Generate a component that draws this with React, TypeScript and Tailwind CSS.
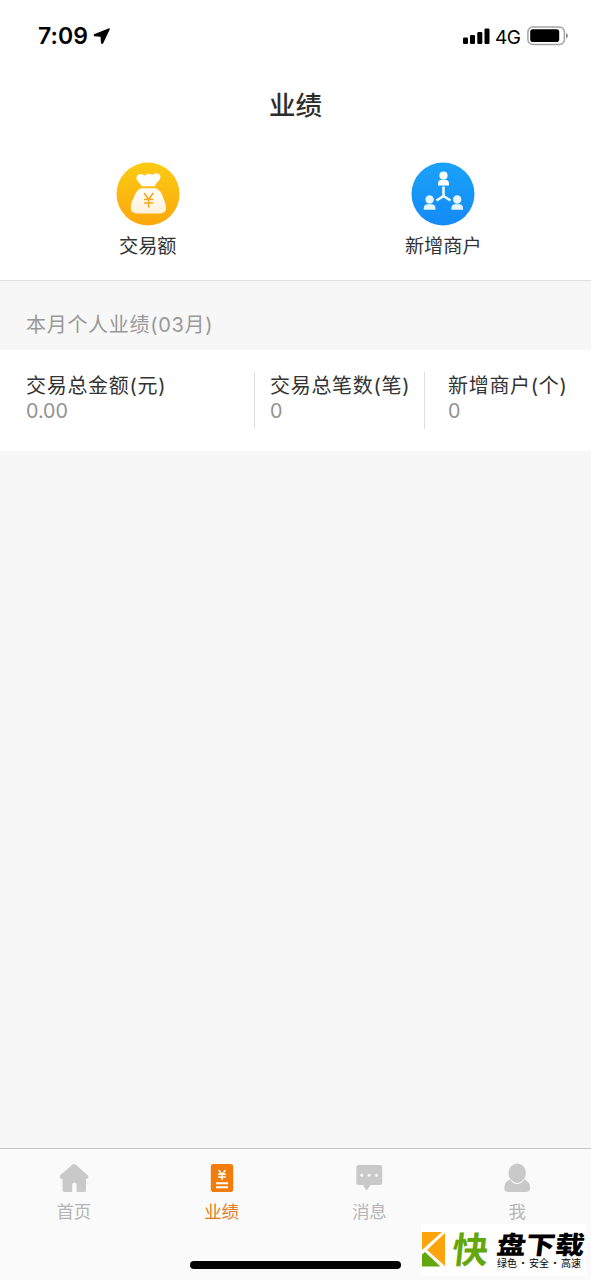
import type { ReactNode } from "react";

function StatusBar() {
  return (
    <div className="flex h-[72px] items-center justify-between pl-[38px] pr-[22px] text-black">
      <div className="flex items-center">
        <span className="w-[55px] whitespace-nowrap text-[23px] font-semibold leading-none tracking-[0.1px]">7:09</span>
        <svg width="17" height="17" viewBox="0 0 17 17">
          <path d="M16.8 .6Q16.500 0 15.500 .5L1 6.200Q.2 7.500 1.300 8.300L7.500 8.700 8 15Q9 16.900 10.200 15.300L16.700 1.600Z" fill="#000" />
        </svg>
      </div>
      <div className="flex items-center">
        <svg width="27" height="16" viewBox="0 0 27 16" className="mr-[5px]">
          <rect x="0" y="9.5" width="5" height="6.5" rx="1.2" />
          <rect x="7" y="7" width="5" height="9" rx="1.2" />
          <rect x="14.3" y="4" width="5" height="12" rx="1.2" />
          <rect x="21.5" y="0.5" width="5" height="15.5" rx="1.2" />
        </svg>
        <span className="mr-[6px] mt-[2px] w-[26px] whitespace-nowrap text-[19px] leading-none tracking-[-0.5px]">4G</span>
        <svg width="42" height="20" viewBox="0 0 42 20">
          <rect x=".9" y="1" width="36.5" height="17.5" rx="5" fill="none" stroke="#a3a3a3" strokeWidth="1.5" />
          <rect x="3.2" y="3.3" width="29" height="12.8" rx="2.8" />
          <path d="M39 7v5.5q2-1 2-2.75T39 7Z" fill="#8c8c8c" />
        </svg>
      </div>
    </div>
  );
}

function MoneyIcon() {
  return (
    <svg width="64" height="64" viewBox="0 0 64 64">
      <defs>
        <linearGradient id="gold" x1="0" y1="0" x2="0" y2="1">
          <stop offset="0" stopColor="#fbcb14" />
          <stop offset="1" stopColor="#fba70d" />
        </linearGradient>
        <linearGradient id="bag" x1="0" y1="0" x2="0" y2="1">
          <stop offset="0" stopColor="#fff" />
          <stop offset="1" stopColor="#fff1d9" />
        </linearGradient>
      </defs>
      <circle cx="32" cy="32" r="31.5" fill="url(#gold)" />
      <path d="M25.500 24.300Q24.500 21.500 22 19.500Q18.500 15 22.500 12.600Q25.500 11 28.800 13.500Q32.500 10.500 36 13Q40 9.800 43.500 12.500Q46 16 42 19.500Q39.500 21.500 39 24.300Z" fill="#fff" />
      <path d="M26 26.300H39Q43 27 45.500 31.500L49 40.500Q52.500 51.500 43.500 51.500H21.500Q12.500 51.500 15.500 40.500L19.500 31.500Q22 27 26 26.300Z" fill="url(#bag)" />
      <path d="m28.200 31 4.500 6.500 4.500-6.500M28 37.500h9.400M28 41h9.400M32.700 37.500v8" fill="none" stroke="#efaa20" strokeWidth="1.600" />
    </svg>
  );
}

function MerchantIcon() {
  return (
    <svg width="64" height="64" viewBox="0 0 64 64">
      <defs>
        <linearGradient id="azure" x1="0" y1="0" x2="0" y2="1">
          <stop offset="0" stopColor="#1aa2f8" />
          <stop offset="1" stopColor="#148af6" />
        </linearGradient>
      </defs>
      <circle cx="32" cy="32" r="31.5" fill="url(#azure)" />
      <g fill="#fff">
        <circle cx="32.500" cy="13.500" r="4.100" />
        <path d="M27 23.600v-1.800q0-4 4-4h3q4 0 4 4v1.800Z" />
      </g>
      <path d="M32.500 24.500v9.500l-7 4.500M32.500 34l7 4.500" fill="none" stroke="#eef9ff" strokeWidth="2.600" />
      <g fill="#e6f7ff">
        <circle cx="18.600" cy="37.500" r="4.200" />
        <path d="M12.800 47.800v-1.500q0-4 4-4h3.600q4 0 4 4v1.500Z" />
        <circle cx="46.200" cy="37.500" r="4.200" />
        <path d="M40.400 47.800v-1.500q0-4 4-4h3.600q4 0 4 4v1.500Z" />
      </g>
    </svg>
  );
}

function Shortcut({ icon, label }: { icon: ReactNode; label: string }) {
  return (
    <div className="flex flex-1 flex-col items-center">
      {icon}
      <span className="mt-[6px] text-[19.2px] leading-[28px] text-[#333]">{label}</span>
    </div>
  );
}

function Stat({ label, value }: { label: string; value: string }) {
  return (
    <div className="flex flex-col whitespace-nowrap pt-px text-[20px] leading-[26px] tracking-[0.7px]">
      <span className="text-[#333]">{label}</span>
      <span className="text-[19.700px] leading-[24px] tracking-[0] text-[#919191]">{value}</span>
    </div>
  );
}

function Tab({ icon, label, active = false }: { icon: ReactNode; label: string; active?: boolean }) {
  return (
    <div className={active ? "flex flex-1 flex-col items-center text-[#e67a22]" : "flex flex-1 flex-col items-center text-[#b5b5b5]"}>
      {icon}
      <span className="mt-[6px] text-[17.5px] leading-[24px]">{label}</span>
    </div>
  );
}

const tabs = [
  {
    label: "首页",
    icon: (
      <svg width="32" height="32" viewBox="0 0 32 32">
        <path d="M14.500 2.600Q16 1.400 17.500 2.600L29.500 13Q31.500 16.200 29 16.700H28V28Q28 30 26 30H18.600V23Q18.600 20.500 16.400 20.500T14.200 23V30H6.500Q4.500 30 4.500 28V16.700H3Q.8 16.200 2.500 13Z" fill="#c9c9c9" />
      </svg>
    ),
  },
  {
    label: "业绩",
    active: true,
    icon: (
      <svg width="32" height="32" viewBox="0 0 32 32">
        <rect x="4.800" y="2" width="22.400" height="28" rx="2.800" fill="#f27d0c" />
        <path d="m12.500 8 3.500 4.500L19.500 8M12 12.300h8M12 15h8M16 12.500V18" fill="none" stroke="#fff" strokeWidth="1.400" />
        <path d="M10 21.200h12M10 25.200h12" stroke="#fff" strokeWidth="1.900" />
      </svg>
    ),
  },
  {
    label: "消息",
    icon: (
      <svg width="32" height="32" viewBox="0 0 32 32">
        <path d="M6 3H26.500Q29.200 3 29.200 5.500V20.500Q29.200 23 26.500 23H17.500L13.700 28.500 9.800 23H6Q3.300 23 3.300 20.500V5.500Q3.300 3 6 3Z" fill="#c9c9c9" />
        <g fill="#fafafa">
          <circle cx="8.800" cy="13.200" r="1.500" />
          <circle cx="16.200" cy="13.200" r="1.500" />
          <circle cx="23.500" cy="13.200" r="1.500" />
        </g>
      </svg>
    ),
  },
  {
    label: "我",
    icon: (
      <svg width="32" height="32" viewBox="0 0 32 32">
        <path d="M9.500 17Q3.200 20 3.200 26Q3.200 30 8 30H24.500Q29.200 30 29.200 26Q29.200 20 23 17Z" fill="#c9c9c9" />
        <path d="M9.500 17Q12 21.500 16.200 21.500T23 17" fill="none" stroke="#fafafa" strokeWidth="1.300" />
        <ellipse cx="16.200" cy="11" rx="8.700" ry="9.500" fill="#c9c9c9" />
      </svg>
    ),
  },
];

function DownloadBadge() {
  return (
    <div className="absolute left-[421px] top-[1224px] flex h-[52px] w-[165px] bg-white pl-px pt-[8px] font-['Noto_Sans_CJK_SC',sans-serif]">
      <svg width="24" height="35" viewBox="0 0 24 35" className="shrink-0">
        <path d="M0 0H20L0 18Z" fill="#fda30b" />
        <path d="M23 1V34L5 18Z" fill="#fda30b" />
        <path d="M3 20 18.500 34.500H0V22.500Z" fill="#64a70b" />
      </svg>
      <span className="ml-[6px] mt-[-3px] w-[36px] -skew-x-6 whitespace-nowrap text-[36px] font-bold leading-[36px] text-[#64a70b]">快</span>
      <div className="ml-[9px] w-[88px] whitespace-nowrap text-black">
        <div className="mt-[-1px] h-[24px] w-[75px] origin-left scale-x-[1.17] text-[25px] font-black leading-[24px]">
          <div className="-skew-x-6">盘下载</div>
        </div>
        <div className="mt-px flex w-[84px] justify-between text-[10px] font-normal leading-[13px]">
          <span>绿色</span><span>·</span><span>安全</span><span>·</span><span>高速</span>
        </div>
      </div>
    </div>
  );
}

export default function App() {
  return (
    <div className="relative flex h-[1280px] w-[591px] flex-col overflow-hidden bg-[#f7f7f7] font-['Inter','Noto_Sans_CJK_SC',sans-serif]">
      <header className="h-[281px] shrink-0 border-b border-[#e1e1e1] bg-white">
        <StatusBar />
        <h1 className="h-[90px] text-center text-[26.5px] font-medium leading-[66px] text-[#2d2d2d]">业绩</h1>
        <div className="flex">
          <Shortcut icon={<MoneyIcon />} label="交易额" />
          <Shortcut icon={<MerchantIcon />} label="新增商户" />
        </div>
      </header>
      <main className="flex-1">
        <h2 className="h-[69px] pl-[26px] pt-[31px] text-[20px] leading-[26px] tracking-[0.7px] text-[#999]">本月个人业绩(03月)</h2>
        <section className="flex h-[101px] bg-white pl-[26px] pt-[22px]">
          <div className="h-[57px] w-[229px] border-r border-[#dedede]"><Stat label="交易总金额(元)" value="0.00" /></div>
          <div className="h-[57px] w-[170px] border-r border-[#dedede] pl-[15px]"><Stat label="交易总笔数(笔)" value="0" /></div>
          <div className="pl-[23px]"><Stat label="新增商户(个)" value="0" /></div>
        </section>
      </main>
      <nav className="flex h-[132px] shrink-0 border-t border-[#c4c4c4] bg-[#fafafa] pt-[13px]">
        {tabs.map((tab) => (
          <Tab key={tab.label} icon={tab.icon} label={tab.label} active={tab.active} />
        ))}
      </nav>
      <div className="absolute left-[190px] top-[1261px] h-[8px] w-[211px] rounded-full bg-black" />
      <DownloadBadge />
    </div>
  );
}
